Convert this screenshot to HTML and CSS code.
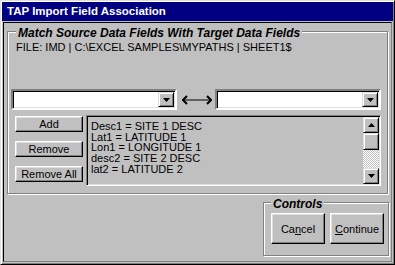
FILE: index.html
```html
<!DOCTYPE html>
<html lang="en">
<head>
  <meta charset="UTF-8" />
  <title>TAP Import Field Association</title>
  <link rel="stylesheet" href="styles.css">
</head>
<body>
  <div class="window">
    <div class="titlebar">TAP Import Field Association</div>

    <div class="client">
      <div class="group main-group">
        <div class="legend">Match Source Data Fields With Target Data Fields</div>
        <div class="file-path">FILE: IMD | C:\EXCEL SAMPLES\MYPATHS | SHEET1$</div>

        <div class="combos">
          <div class="combo">
            <span class="combo-value"></span>
            <span class="drop-btn"><svg width="7" height="4" viewBox="0 0 7 4"><path d="M0 0h7L3.5 4z" fill="#000"/></svg></span>
          </div>
          <svg class="link-arrow" width="30" height="10" viewBox="0 0 30 10">
            <path d="M5 1L1 5l4 4M25 1l4 4-4 4" fill="none" stroke="#000" stroke-width="2"/>
            <path d="M2 5h26" stroke="#000" stroke-width="1"/>
          </svg>
          <div class="combo">
            <span class="combo-value"></span>
            <span class="drop-btn"><svg width="7" height="4" viewBox="0 0 7 4"><path d="M0 0h7L3.5 4z" fill="#000"/></svg></span>
          </div>
        </div>

        <div class="mapping">
          <div class="map-buttons">
            <button class="btn small">Add</button>
            <button class="btn small">Remove</button>
            <button class="btn small">Remove All</button>
          </div>
          <div class="listbox">
            <ul class="items">
              <li>Desc1 = SITE 1 DESC</li>
              <li>Lat1 = LATITUDE 1</li>
              <li>Lon1 = LONGITUDE 1</li>
              <li>desc2 = SITE 2 DESC</li>
              <li>lat2 = LATITUDE 2</li>
            </ul>
            <div class="scrollbar">
              <span class="sb-btn"><svg width="7" height="4" viewBox="0 0 7 4"><path d="M0 4h7L3.5 0z" fill="#000"/></svg></span>
              <span class="sb-thumb"></span>
              <span class="sb-track"></span>
              <span class="sb-btn"><svg width="7" height="4" viewBox="0 0 7 4"><path d="M0 0h7L3.5 4z" fill="#000"/></svg></span>
            </div>
          </div>
        </div>
      </div>

      <div class="bottom-row">
        <div class="group controls-group">
          <div class="legend">Controls</div>
          <div class="control-buttons">
            <button class="btn big">Ca<u>n</u>cel</button>
            <button class="btn big"><u>C</u>ontinue</button>
          </div>
        </div>
      </div>
    </div>
  </div>
</body>
</html>
```

FILE: styles.css
```css
body {
  margin: 0;
  background: #c0c0c0;
  font-family: "Liberation Sans", Arial, sans-serif;
  font-size: 11px;
  color: #000;
}
.window {
  width: 395px;
  height: 265px;
  box-sizing: border-box;
  border: 1px solid;
  border-color: #dfdfdf #000 #000 #dfdfdf;
  box-shadow: inset 1px 1px #fff, inset -1px -1px #808080;
  padding: 1px;
  display: flex;
  flex-direction: column;
}
.titlebar {
  height: 19px;
  background: #000080;
  color: #fff;
  font-weight: bold;
  font-size: 11.5px;
  line-height: 19px;
  padding-left: 5px;
}
.client {
  flex: 1;
  margin: 1px 1px 1px 1px;
  border: 1px solid;
  border-color: #000 #808080 #808080 #000;
  display: flex;
  flex-direction: column;
}
.group {
  border: 1px solid #808080;
  box-shadow: 1px 1px 0 #fff, inset 1px 1px 0 #fff;
}
.legend {
  width: fit-content;
  background: #c0c0c0;
  font-weight: bold;
  font-style: italic;
  font-size: 12px;
  line-height: 13px;
  padding: 0 2px;
}
.main-group {
  margin: 8px 3px 0 3px;
  height: 161px;
  padding: 0 0 0 3px;
}
.main-group .legend {
  margin: -5px 0 0 5px;
}
.file-path {
  padding-left: 5px;
  margin-top: 1px;
  line-height: 13px;
}
.combos {
  display: flex;
  align-items: center;
  margin-top: 35px;
}
.combo {
  width: 160px;
  height: 15px;
  background: #fff;
  border: 2px solid;
  border-color: #808080 #fff #fff #808080;
  box-shadow: inset 1px 1px #000, inset -1px -1px #dfdfdf;
  display: flex;
  justify-content: flex-end;
  align-items: center;
  padding: 1px;
}
.combo + .link-arrow {
  margin: 0 3px 0 5px;
}
.drop-btn,
.sb-btn,
.sb-thumb {
  box-sizing: border-box;
  width: 16px;
  height: 16px;
  background: #c0c0c0;
  border: 1px solid;
  border-color: #dfdfdf #000 #000 #dfdfdf;
  box-shadow: inset 1px 1px #fff, inset -1px -1px #808080;
  display: flex;
  align-items: center;
  justify-content: center;
}
.drop-btn {
  height: 15px;
}
.mapping {
  display: flex;
  margin-top: 5px;
}
.map-buttons {
  display: flex;
  flex-direction: column;
  gap: 9px;
  margin: 1px 3px 0 4px;
}
.btn {
  font-family: "Liberation Sans", Arial, sans-serif;
  font-size: 11px;
  color: #000;
  background: #c0c0c0;
  border: 1px solid;
  border-color: #fff #000 #000 #fff;
  box-shadow: inset -1px -1px #808080, inset 1px 1px #dfdfdf;
  padding: 0;
}
.btn.small {
  width: 68px;
  height: 16px;
  line-height: 13px;
}
.listbox {
  width: 295px;
  height: 71px;
  box-sizing: border-box;
  border: 1px solid;
  border-color: #808080 #fff #fff #808080;
  box-shadow: inset 1px 1px #000, inset -1px -1px #dfdfdf;
  padding: 1px;
  display: flex;
}
.items {
  flex: 1;
  list-style: none;
  margin: 0;
  padding: 4px 0 0 3px;
  line-height: 10.7px;
}
.scrollbar {
  width: 16px;
  display: flex;
  flex-direction: column;
}
.sb-thumb {
  height: 17px;
}
.sb-track {
  flex: 1;
  background-color: #fff;
  background-image: conic-gradient(#c0c0c0 25%, #fff 0 50%, #c0c0c0 0 75%, #fff 0);
  background-size: 2px 2px;
}
.bottom-row {
  display: flex;
  justify-content: flex-end;
  margin: 8px 2px 0 0;
}
.controls-group {
  width: 124px;
  height: 52px;
}
.controls-group .legend {
  margin: -5px 0 0 7px;
}
.control-buttons {
  display: flex;
  gap: 5px;
  margin: 2px 0 0 7px;
}
.btn.big {
  width: 54px;
  height: 31px;
}
```
